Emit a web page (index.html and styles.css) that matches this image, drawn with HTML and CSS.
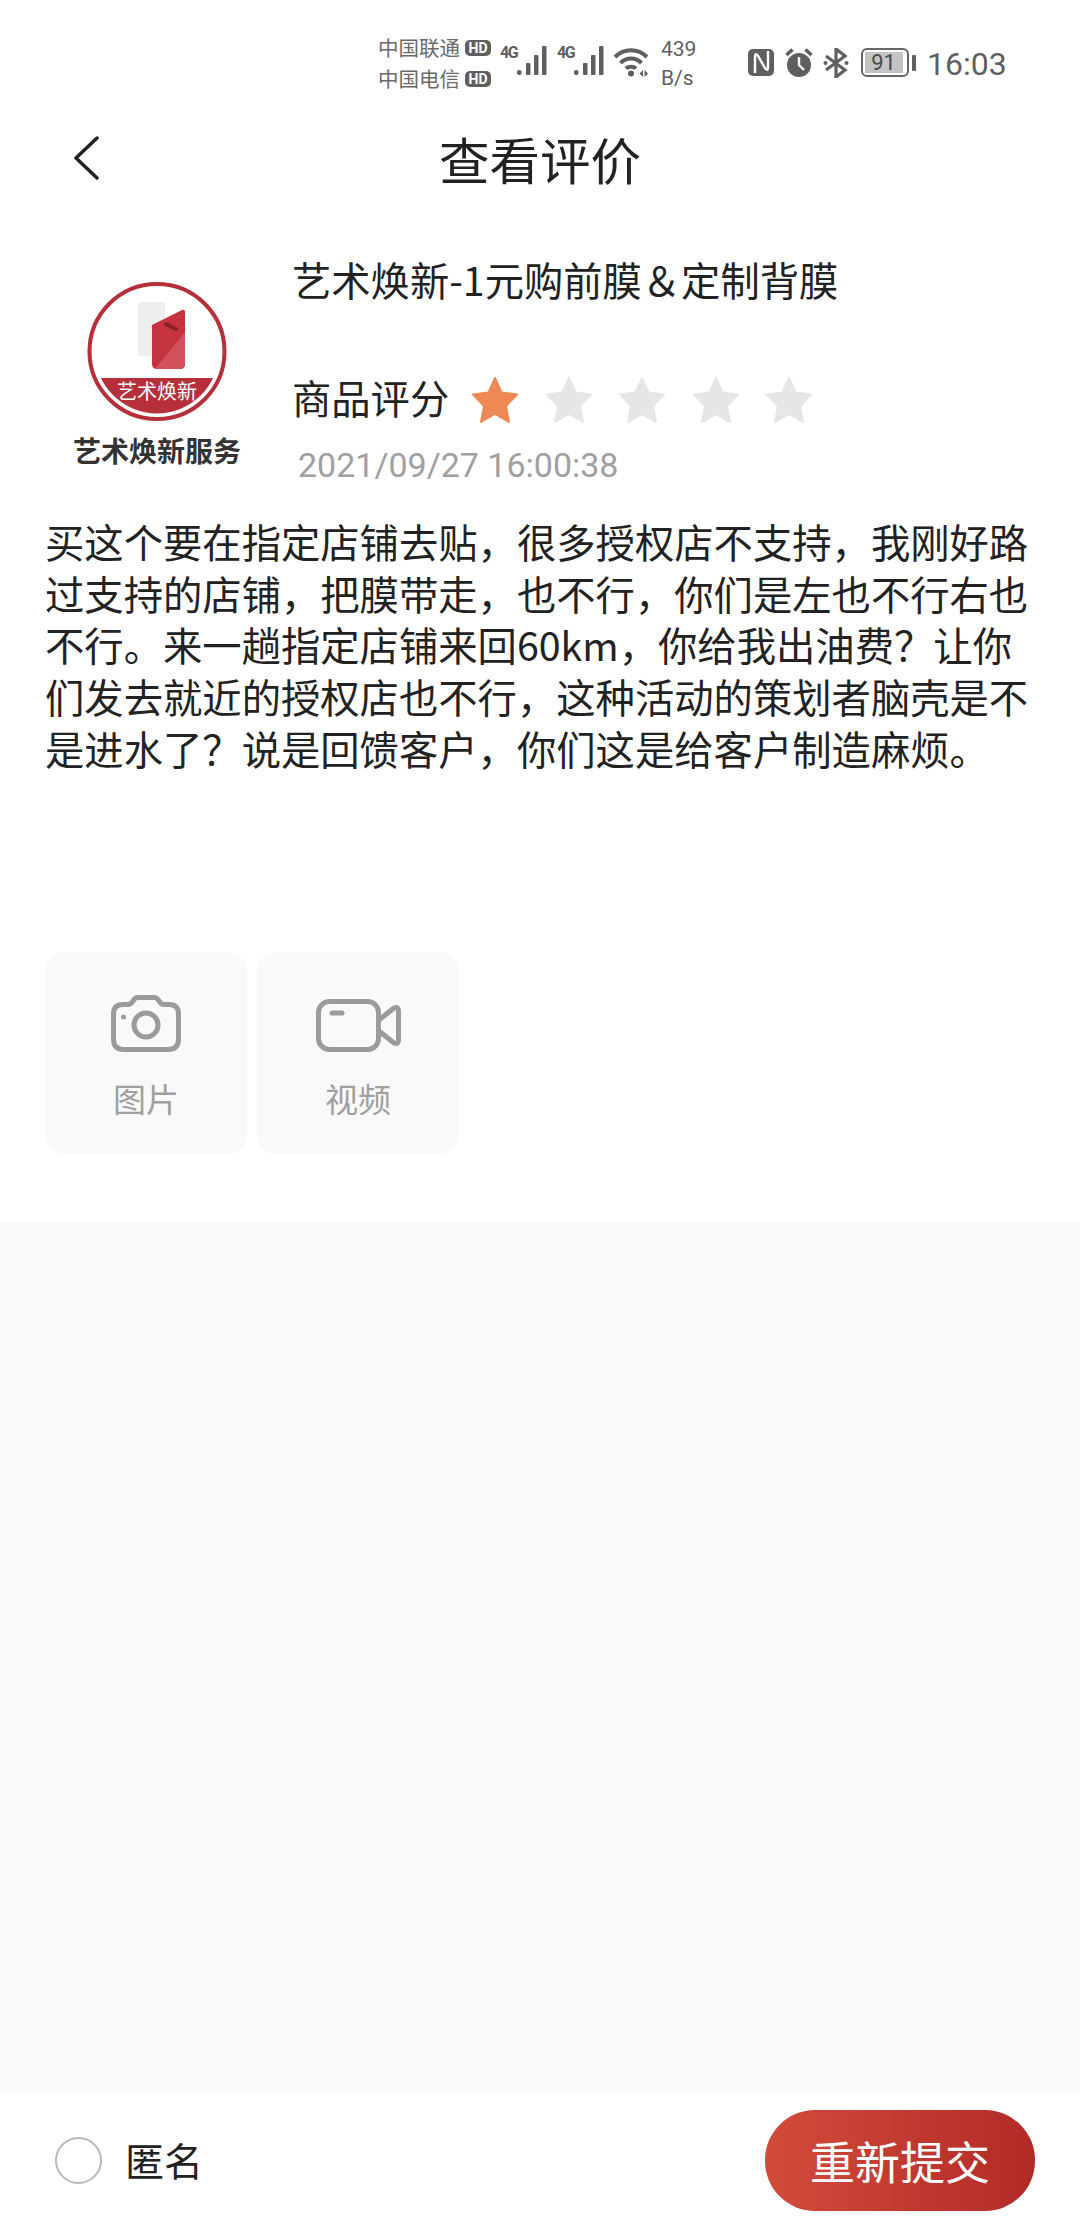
FILE: index.html
```html
<!DOCTYPE HTML>
<html>
<head>
<meta charset="utf-8">
<title>查看评价</title>
<link rel="stylesheet" href="styles.css">
</head>

<body>
<div class="page">
	<div class="status">
		<div class="carriers">
			<div class="carrier">中国联通<span class="hd">HD</span></div>
			<div class="carrier">中国电信<span class="hd">HD</span></div>
		</div>
		<div class="signal">
			<span class="net">4G</span>
			<svg width="30" height="30" viewBox="0 0 30 30"><rect x="0" y="25" width="4.500" height="5" rx="2"/><rect x="9" y="18" width="4.500" height="12" rx="1"/><rect x="17" y="10" width="4.500" height="20" rx="1"/><rect x="25" y="1" width="4.500" height="29" rx="1"/></svg>
		</div>
		<div class="signal">
			<span class="net">4G</span>
			<svg width="30" height="30" viewBox="0 0 30 30"><rect x="0" y="25" width="4.500" height="5" rx="2"/><rect x="9" y="18" width="4.500" height="12" rx="1"/><rect x="17" y="10" width="4.500" height="20" rx="1"/><rect x="25" y="1" width="4.500" height="29" rx="1"/></svg>
		</div>
		<svg class="wifi" width="36" height="32" viewBox="0 0 36 32" fill="none" stroke="#5f5f5f" stroke-width="4">
			<path d="M2 11C11 2 25 2 34 11"/>
			<path d="M7.500 17C13.500 11 22.500 11 28.500 17"/>
			<path d="M13 22.500C15.500 20 20.500 20 23 22.500"/>
			<circle cx="18" cy="27.500" r="3" fill="#5f5f5f" stroke="none"/>
			<path d="M30 24V31L26.500 27.500ZM31.500 24V31L35 27.500Z" fill="#5f5f5f" stroke="none"/>
		</svg>
		<div class="speed"><div>439</div><div>B/s</div></div>
		<svg class="nfc" width="28" height="30" viewBox="0 0 28 30">
			<rect x="1" y="2" width="26" height="27" rx="5" fill="#5f5f5f"/>
			<path d="M8 26V10Q8 5 11 9L18 21Q21 25 21 20V4" fill="none" stroke="#fff" stroke-width="2.400"/>
		</svg>
		<svg class="alarm" width="28" height="30" viewBox="0 0 28 30">
			<circle cx="14" cy="18" r="12" fill="#5f5f5f"/>
			<path d="M14 10V18L19 23" fill="none" stroke="#fff" stroke-width="2.400"/>
			<path d="M1.500 8L7.500 2.500M26.500 8L20.500 2.500" fill="none" stroke="#5f5f5f" stroke-width="3.500"/>
		</svg>
		<svg class="bt" width="26" height="30" viewBox="0 0 26 30" fill="none" stroke="#5f5f5f" stroke-width="3.200">
			<path d="M3 8L22 22L13 29V1L22 8L3 22"/>
			<circle cx="2.500" cy="15" r="2" fill="#5f5f5f" stroke="none"/>
			<circle cx="23.500" cy="15" r="2" fill="#5f5f5f" stroke="none"/>
		</svg>
		<div class="battery">
			<div class="battery-box"><span class="battery-fill">91</span></div>
			<span class="battery-tip"></span>
		</div>
		<div class="clock">16:03</div>
	</div>

	<div class="header">
		<svg class="back" width="26" height="44" viewBox="0 0 26 44" fill="none" stroke="#222" stroke-width="3.500" stroke-linecap="round" stroke-linejoin="round"><path d="M24 2L3 22L24 42"/></svg>
		<div class="title">查看评价</div>
	</div>

	<div class="content">
		<div class="product">
			<div class="logo">
				<svg width="142" height="139" viewBox="0 0 142 139">
					<defs><clipPath id="ring"><circle cx="71" cy="69.500" r="62"/></clipPath></defs>
					<rect x="52" y="20" width="27" height="54" rx="3" fill="#eeeeee"/>
					<path d="M66 43L96 28Q100 27 99 33V82Q99 87 94 87H71Q66 87 66 82Z" fill="#c5333e"/>
					<path d="M69 87L99 50V82Q99 87 94 87Z" fill="#d2525b"/>
					<path d="M80 42L90 47" stroke="#8e2029" stroke-width="4" stroke-linecap="round"/>
					<rect x="0" y="96" width="142" height="43" fill="#b5303a" clip-path="url(#ring)"/>
					<circle cx="71" cy="69.500" r="67.500" fill="none" stroke="#b5303a" stroke-width="4"/>
					<text class="logo-band" x="71" y="117" text-anchor="middle">艺术焕新</text>
				</svg>
				<div class="logo-name">艺术焕新服务</div>
			</div>
			<div class="info">
				<div class="name">艺术焕新-1元购前膜＆定制背膜</div>
				<div class="rating">
					<span class="rating-label">商品评分</span>
					<div class="stars">
						<svg class="star on" viewBox="0 0 46 46"><path d="M23 1L29.500 15.500L45 17.500L34 29L37 45L23 37L9 45L12 29L1 17.500L16.500 15.500Z"/></svg>
						<svg class="star" viewBox="0 0 46 46"><path d="M23 1L29.500 15.500L45 17.500L34 29L37 45L23 37L9 45L12 29L1 17.500L16.500 15.500Z"/></svg>
						<svg class="star" viewBox="0 0 46 46"><path d="M23 1L29.500 15.500L45 17.500L34 29L37 45L23 37L9 45L12 29L1 17.500L16.500 15.500Z"/></svg>
						<svg class="star" viewBox="0 0 46 46"><path d="M23 1L29.500 15.500L45 17.500L34 29L37 45L23 37L9 45L12 29L1 17.500L16.500 15.500Z"/></svg>
						<svg class="star" viewBox="0 0 46 46"><path d="M23 1L29.500 15.500L45 17.500L34 29L37 45L23 37L9 45L12 29L1 17.500L16.500 15.500Z"/></svg>
					</div>
				</div>
				<div class="date">2021/09/27 16:00:38</div>
			</div>
		</div>

		<p class="comment">买这个要在指定店铺去贴，很多授权店不支持，我刚好路过支持的店铺，把膜带走，也不行，你们是左也不行右也不行。来一趟指定店铺来回60km，你给我出油费？让你们发去就近的授权店也不行，这种活动的策划者脑壳是不是进水了？说是回馈客户，你们这是给客户制造麻烦。</p>

		<div class="media">
			<div class="tile">
				<svg class="tile-icon" width="70" height="57" viewBox="0 0 70 57" fill="none" stroke="#9b9b9b" stroke-width="5">
					<path d="M12 9.500H17Q20 9.500 22 6L23 4.500Q24.500 2.500 27 2.500H43Q45.500 2.500 47 4.500L48 6Q50 9.500 53 9.500H58Q67.500 9.500 67.500 19V44Q67.500 54.500 57 54.500H13Q2.500 54.500 2.500 44V19Q2.500 9.500 12 9.500Z"/>
					<circle cx="35" cy="30" r="12"/>
					<circle cx="12.500" cy="22" r="2.500" fill="#9b9b9b" stroke="none"/>
				</svg>
				<div class="tile-label">图片</div>
			</div>
			<div class="tile">
				<svg class="tile-icon" width="85" height="57" viewBox="0 0 85 57" fill="none" stroke="#9b9b9b" stroke-width="5">
					<rect x="2.500" y="6.500" width="60" height="48" rx="11"/>
					<path d="M63 25L78 13Q82.500 11 82.500 16V45Q82.500 50 78 48L63 36"/>
					<path d="M16 18H26" stroke-linecap="round"/>
				</svg>
				<div class="tile-label">视频</div>
			</div>
		</div>
	</div>

	<div class="blank"></div>

	<div class="footer">
		<div class="anon">
			<span class="radio"></span>
			<span class="anon-label">匿名</span>
		</div>
		<div class="submit">重新提交</div>
	</div>
</div>
</body>
</html>
```

FILE: styles.css
```css
*{padding:0;margin:0;box-sizing:border-box}
body{background:#fff;font-family:"Noto Sans CJK SC","Roboto",sans-serif;color:#222}
.page{width:1080px;height:2228px;display:flex;flex-direction:column;overflow:hidden}

.status{height:90px;padding:32px 0 0 378px;display:flex;align-items:flex-start;color:#5f5f5f;flex:none}
.carriers{width:122px;flex:none}
.carrier{height:31px;font-size:20.500px;line-height:31px;color:#6a6a6a;display:flex;align-items:center;white-space:nowrap}
.hd{width:26px;height:16px;margin-left:5px;border-radius:5px;background:#5f5f5f;color:#fff;font:bold 14px/16px "Roboto",sans-serif;text-align:center}
.signal{width:57px;height:44px;display:flex;align-items:flex-start;padding-top:14px;flex:none}
.signal svg{fill:#5f5f5f;margin-top:-1px;flex:none}
.net{width:17px;font:bold 16px/14px "Roboto",sans-serif;letter-spacing:-1.500px;color:#5f5f5f;flex:none}
.wifi{margin:14px 12px 0 -1px;flex:none}
.speed{width:50px;font:21px/29px "Roboto",sans-serif;color:#5f5f5f;margin:3px 36px 0 0;flex:none}
.nfc{margin:15px 10px 0 0;flex:none}
.alarm{margin:15px 10px 0 0;flex:none}
.bt{margin:16px 12px 0 0;flex:none}
.battery{display:flex;align-items:center;margin:16px 11px 0 0;height:29px;flex:none}
.battery-box{width:48px;height:29px;border:2.500px solid #666;border-radius:6px;padding:1.500px}
.battery-fill{display:block;width:38px;height:21px;background:#c4c4c4;font:22px/21px "Roboto",sans-serif;color:#4a4a4a;text-align:center}
.battery-tip{width:4px;height:16px;background:#5f5f5f;margin-left:3px;border-radius:1px}
.clock{font:32px/34px "Roboto",sans-serif;color:#5f5f5f;margin-top:15px;flex:none}

.header{height:140px;position:relative;flex:none;display:flex;align-items:center;justify-content:center}
.back{position:absolute;left:73px;top:46px}
.title{font-size:50.500px;line-height:60px;margin-top:-5px}

.content{height:992px;flex:none}
.product{display:flex;height:280px}
.logo{width:292px;padding:52px 0 0 22px;display:flex;flex-direction:column;align-items:center;flex:none}
.logo-band{font-size:20px;fill:#fff}
.logo-name{font-size:28px;line-height:36px;font-weight:700;color:#333;margin-top:11px;white-space:nowrap}
.info{flex:1}
.name{font-size:39.300px;line-height:52px;margin-top:23px;white-space:nowrap}
.rating{display:flex;align-items:center;height:60px;margin-top:65px}
.rating-label{font-size:39.300px;line-height:52px;margin-top:-6px}
.stars{display:flex;gap:27.500px;margin-left:23px}
.star{width:46px;height:46px;fill:#e6e6e6;stroke:#e6e6e6;stroke-width:2;stroke-linejoin:round}
.star.on{fill:#ee8855;stroke:#ee8855}
.date{font:34px/44px "Roboto",sans-serif;color:#a0a0a0;margin:13px 0 0 6px}
.comment{font-size:39.330px;line-height:51.670px;padding:0 45px;margin-top:5px;height:437px}
.media{display:flex;gap:10px;padding-left:45px}
.tile{width:202px;height:202px;border-radius:20px;background:#f9f9f9;display:flex;flex-direction:column;align-items:center;padding-top:43px}
.tile-icon{height:57px;flex:none}
.tile-label{font-size:33px;line-height:44px;color:#a0a0a0;margin-top:24px}

.blank{flex:1;background:#f9f9f9}
.footer{height:135px;flex:none;display:flex;align-items:center;justify-content:space-between;padding:0 45px 0 55px}
.anon{display:flex;align-items:center}
.radio{width:47px;height:47px;border:2.500px solid #b8b8b8;border-radius:50%}
.anon-label{font-size:39px;line-height:52px;margin:-3px 0 0 23px}
.submit{width:270px;height:101px;border-radius:50px;background:linear-gradient(90deg,#d24c3c,#b22a26);color:#fff;font-size:45px;line-height:101px;text-align:center}
```
